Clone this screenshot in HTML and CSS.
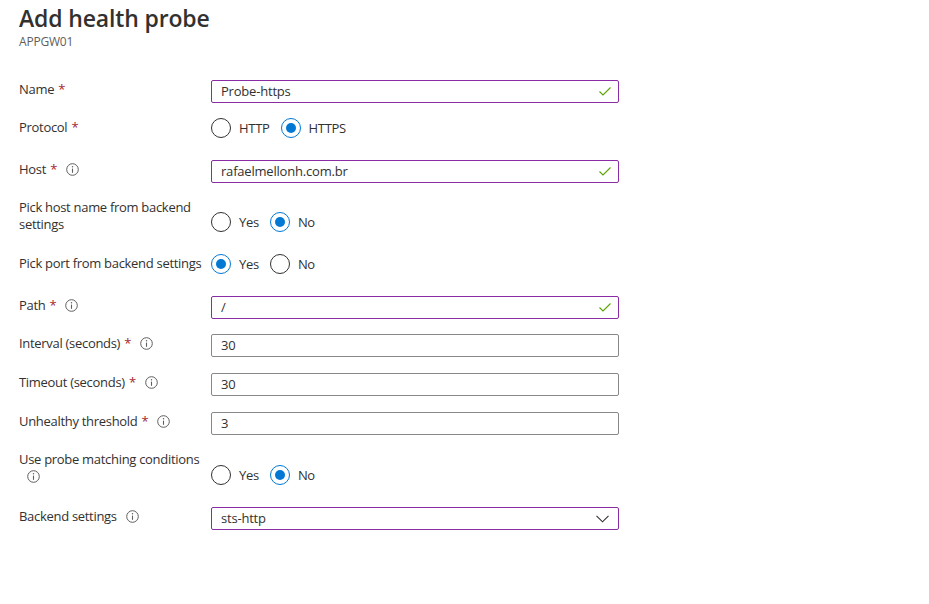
FILE: index.html
```html
<!DOCTYPE html>
<html lang="en">
<head>
<meta charset="utf-8">
<title>Add health probe</title>
<link rel="stylesheet" href="styles.css">
</head>
<body>
<div class="blade">
  <header class="head">
    <h1 class="title">Add health probe</h1>
    <div class="subtitle">APPGW01</div>
  </header>

  <form class="form">
    <div class="row row-name">
      <div class="label">Name <span class="req">*</span></div>
      <div class="input valid"><span>Probe-https</span>
        <svg class="check" width="12" height="9" viewBox="0 0 12 9"><polyline points="0.5,4.5 4,8 11.5,0.5" fill="none" stroke="#57a300" stroke-width="1.1"/></svg>
      </div>
    </div>

    <div class="row row-radio mt15">
      <div class="label">Protocol <span class="req">*</span></div>
      <div class="radios">
        <span class="radio"><i class="dot"></i>HTTP</span>
        <span class="radio on"><i class="dot"></i>HTTPS</span>
      </div>
    </div>

    <div class="row mt22">
      <div class="label">Host <span class="req">*</span><svg class="info" width="13" height="13" viewBox="0 0 13 13"><circle cx="6.5" cy="6.5" r="5.8" fill="none" stroke="#605e5c" stroke-width="1"/><line x1="6.5" y1="5.6" x2="6.5" y2="9.8" stroke="#605e5c" stroke-width="1.1"/><circle cx="6.5" cy="3.8" r="0.75" fill="#605e5c"/></svg></div>
      <div class="input valid"><span>rafaelmellonh.com.br</span>
        <svg class="check" width="12" height="9" viewBox="0 0 12 9"><polyline points="0.5,4.5 4,8 11.5,0.5" fill="none" stroke="#57a300" stroke-width="1.1"/></svg>
      </div>
    </div>

    <div class="row row-two mt16">
      <div class="label two">Pick host name from backend<br>settings</div>
      <div class="radios low">
        <span class="radio"><i class="dot"></i>Yes</span>
        <span class="radio on"><i class="dot"></i>No</span>
      </div>
    </div>

    <div class="row row-radio mt21">
      <div class="label">Pick port from backend settings</div>
      <div class="radios">
        <span class="radio on"><i class="dot"></i>Yes</span>
        <span class="radio"><i class="dot"></i>No</span>
      </div>
    </div>

    <div class="row mt22">
      <div class="label">Path <span class="req">*</span><svg class="info" width="13" height="13" viewBox="0 0 13 13"><circle cx="6.5" cy="6.5" r="5.8" fill="none" stroke="#605e5c" stroke-width="1"/><line x1="6.5" y1="5.6" x2="6.5" y2="9.8" stroke="#605e5c" stroke-width="1.1"/><circle cx="6.5" cy="3.8" r="0.75" fill="#605e5c"/></svg></div>
      <div class="input valid"><span>/</span>
        <svg class="check" width="12" height="9" viewBox="0 0 12 9"><polyline points="0.5,4.5 4,8 11.5,0.5" fill="none" stroke="#57a300" stroke-width="1.1"/></svg>
      </div>
    </div>

    <div class="row mt15">
      <div class="label">Interval (seconds) <span class="req">*</span><svg class="info" width="13" height="13" viewBox="0 0 13 13"><circle cx="6.5" cy="6.5" r="5.8" fill="none" stroke="#605e5c" stroke-width="1"/><line x1="6.5" y1="5.6" x2="6.5" y2="9.8" stroke="#605e5c" stroke-width="1.1"/><circle cx="6.5" cy="3.8" r="0.75" fill="#605e5c"/></svg></div>
      <div class="input"><span>30</span></div>
    </div>

    <div class="row mt16">
      <div class="label">Timeout (seconds) <span class="req">*</span><svg class="info" width="13" height="13" viewBox="0 0 13 13"><circle cx="6.5" cy="6.5" r="5.8" fill="none" stroke="#605e5c" stroke-width="1"/><line x1="6.5" y1="5.6" x2="6.5" y2="9.8" stroke="#605e5c" stroke-width="1.1"/><circle cx="6.5" cy="3.8" r="0.75" fill="#605e5c"/></svg></div>
      <div class="input"><span>30</span></div>
    </div>

    <div class="row mt16">
      <div class="label">Unhealthy threshold <span class="req">*</span><svg class="info" width="13" height="13" viewBox="0 0 13 13"><circle cx="6.5" cy="6.5" r="5.8" fill="none" stroke="#605e5c" stroke-width="1"/><line x1="6.5" y1="5.6" x2="6.5" y2="9.8" stroke="#605e5c" stroke-width="1.1"/><circle cx="6.5" cy="3.8" r="0.75" fill="#605e5c"/></svg></div>
      <div class="input"><span>3</span></div>
    </div>

    <div class="row row-two mt16">
      <div class="label two">Use probe matching conditions<br><svg class="info info-wrap" width="13" height="13" viewBox="0 0 13 13"><circle cx="6.5" cy="6.5" r="5.8" fill="none" stroke="#605e5c" stroke-width="1"/><line x1="6.5" y1="5.6" x2="6.5" y2="9.8" stroke="#605e5c" stroke-width="1.1"/><circle cx="6.5" cy="3.8" r="0.75" fill="#605e5c"/></svg></div>
      <div class="radios low2">
        <span class="radio"><i class="dot"></i>Yes</span>
        <span class="radio on"><i class="dot"></i>No</span>
      </div>
    </div>

    <div class="row mt22">
      <div class="label">Backend settings<svg class="info" width="13" height="13" viewBox="0 0 13 13"><circle cx="6.5" cy="6.5" r="5.8" fill="none" stroke="#605e5c" stroke-width="1"/><line x1="6.5" y1="5.6" x2="6.5" y2="9.8" stroke="#605e5c" stroke-width="1.1"/><circle cx="6.5" cy="3.8" r="0.75" fill="#605e5c"/></svg></div>
      <div class="input valid select"><span>sts-http</span>
        <svg class="chev" width="13" height="8" viewBox="0 0 13 8"><polyline points="0.5,0.8 6.5,6.8 12.5,0.8" fill="none" stroke="#323130" stroke-width="1.1"/></svg>
      </div>
    </div>
  </form>
</div>
</body>
</html>
```

FILE: styles.css
```css
* { box-sizing: border-box; }

html, body {
  margin: 0;
  padding: 0;
  background: #ffffff;
}

body {
  font-family: "Open Sans", "Noto Sans", "Liberation Sans", sans-serif;
  font-size: 13px;
  color: #323130;
}

.blade {
  padding: 2px 0 0 19px;
  width: 929px;
  height: 604px;
}

.title {
  margin: 0;
  font-size: 23px;
  line-height: 32px;
  font-weight: 600;
  color: #323130;
  letter-spacing: -0.15px;
}

.subtitle {
  font-size: 12px;
  line-height: 16px;
  color: #605e5c;
  letter-spacing: -0.2px;
}

.form {
  margin-top: 30px;
}

.row {
  display: flex;
  align-items: flex-start;
}

.mt15 { margin-top: 15px; }
.mt16 { margin-top: 16px; }
.mt21 { margin-top: 21px; }
.mt22 { margin-top: 22px; }

.label {
  width: 192px;
  flex: none;
  line-height: 17px;
  padding-top: 1px;
  letter-spacing: -0.3px;
  white-space: nowrap;
}

.label.two {
  padding-top: 0;
}

.row-radio .label {
  padding-top: 1px;
}

.req {
  color: #a4262c;
  margin-left: 1px;
}

.info {
  vertical-align: -2px;
  margin-left: 9px;
}

.info-wrap {
  margin-left: 8px;
  vertical-align: -2px;
}

.input {
  width: 408px;
  height: 23px;
  border: 1px solid #8a8886;
  border-radius: 2px;
  display: flex;
  align-items: center;
  justify-content: space-between;
  padding: 0 7px 0 9px;
  line-height: 17px;
  letter-spacing: -0.2px;
}

.input.valid {
  border-color: #8a2da5;
}

.check { margin-right: 0; margin-top: -1px; }
.chev { margin-right: 2px; }

.radios {
  display: flex;
  align-items: center;
  height: 20px;
}

.radios.low { margin-top: 13px; }
.radios.low2 { margin-top: 14px; }

.radio {
  display: flex;
  align-items: center;
  margin-right: 11px;
  line-height: 17px;
  letter-spacing: -0.3px;
}

.dot {
  width: 20px;
  height: 20px;
  border: 1px solid #323130;
  border-radius: 50%;
  margin-right: 8px;
  flex: none;
  display: flex;
  align-items: center;
  justify-content: center;
}

.radio.on .dot {
  border-color: #0078d4;
}

.radio.on .dot::after {
  content: "";
  width: 10px;
  height: 10px;
  border-radius: 50%;
  background: #0078d4;
}
```
